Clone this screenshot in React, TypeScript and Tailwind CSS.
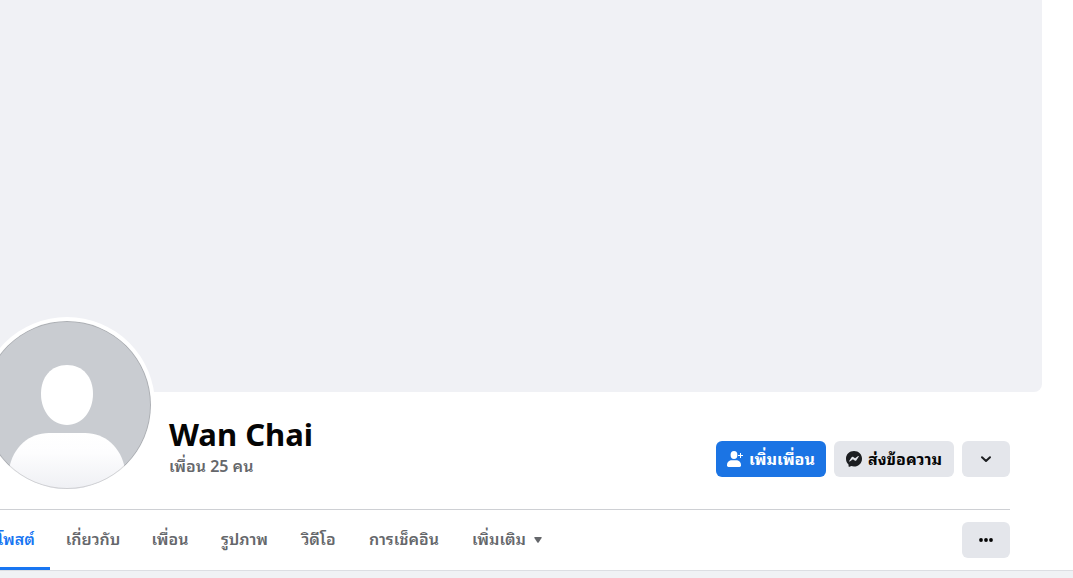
import React from 'react';

const tabs = [
  { label: 'โพสต์', width: 'w-[68px]', active: true },
  { label: 'เกี่ยวกับ', width: 'w-[86px]' },
  { label: 'เพื่อน', width: 'w-[68px]' },
  { label: 'รูปภาพ', width: 'w-[81px]' },
  { label: 'วิดีโอ', width: 'w-[67px]' },
  { label: 'การเช็คอิน', width: 'w-[104px]' },
];

const Avatar = () => (
  <svg viewBox="0 0 168 168" className="block size-[168px] rounded-full" role="img" aria-label="Wan Chai">
    <defs>
      <linearGradient id="body" x1="0" y1="0" x2="0" y2="1">
        <stop offset="0" stopColor="#ffffff" />
        <stop offset="0.35" stopColor="#fdfdfe" />
        <stop offset="1" stopColor="#eff0f4" />
      </linearGradient>
    </defs>
    <rect width="168" height="168" fill="#c9ccd1" />
    <path d="M84 44C100 44 110 56 110 73C110 90 99 104 84 104C69 104 58 90 58 73C58 56 68 44 84 44Z" fill="#fff" />
    <path d="M26 148C30 126 46 112 66 112H102C122 112 138 126 142 148V168H26Z" fill="url(#body)" />
    <circle cx="84" cy="84" r="83.5" fill="none" stroke="#000" strokeOpacity="0.14" />
  </svg>
);

const AddFriendIcon = () => (
  <svg viewBox="0 0 16 16" className="size-4 shrink-0" fill="currentColor" aria-hidden="true">
    <ellipse cx="7" cy="4" rx="3.4" ry="4" />
    <path d="M0 14C0 11 2.2 9.3 5 9.3H9C11.8 9.3 14 11 14 14V14.6Q14 16 12.6 16H1.4Q0 16 0 14.6Z" />
    <path d="M13 2H14V4H16V5H14V7H13V5H11V4H13Z" />
  </svg>
);

const MessengerIcon = () => (
  <svg viewBox="0 0 16 16" className="size-4 shrink-0" aria-hidden="true">
    <path
      d="M8 0C3.4 0 0 3.3 0 7.7C0 10 .9 12 2.5 13.4L2.6 15.2C2.6 15.7 3.1 16 3.6 15.8L5.3 15.1C6.1 15.4 7 15.5 8 15.5C12.6 15.5 16 12.2 16 7.7C16 3.3 12.6 0 8 0Z"
      fill="#1c1e21"
    />
    <path
      d="M3.2 10L5.6 6.2C6 5.6 6.8 5.5 7.3 5.9L9.1 7.3L12.2 5.1C12.6 4.9 13 5.2 12.8 5.6L10.4 9.3C10 9.9 9.2 10 8.7 9.6L6.9 8.2L3.8 10.5C3.4 10.8 3 10.4 3.2 10Z"
      fill="#e4e6eb"
    />
  </svg>
);

export default function App() {
  return (
    <div className="min-h-screen overflow-hidden bg-[#f0f2f5] font-['Noto_Sans','Noto_Sans_Thai_Looped','Noto_Looped_Thai','Noto_Sans_Thai',sans-serif]">
      <header className="border-b border-[#dcdee3] bg-white">
        <div className="mr-[31px] h-[392px] rounded-br-lg bg-[#f0f1f5]" />

        <div className="mr-[63px]">
          <div className="flex h-[117px] items-start">
            <div className="relative -mt-[75px] -ml-[21px] shrink-0 rounded-full bg-white p-1">
              <Avatar />
            </div>

            <div className="ml-[14px] flex-1 pt-6">
              <h1 className="text-[31px] leading-9 font-bold text-[#050505]">Wan Chai</h1>
              <a href="#friends" className="block text-base leading-7 font-semibold text-[#65676b]">
                เพื่อน 25 คน
              </a>
            </div>

            <div className="mt-[49px] flex shrink-0 gap-2 text-base font-bold">
              <button className="flex h-9 w-[110px] items-center justify-center gap-1.5 rounded-md bg-[#1b74e4] whitespace-nowrap text-white">
                <AddFriendIcon />
                เพิ่มเพื่อน
              </button>
              <button className="flex h-9 w-[120px] items-center justify-center gap-1.5 rounded-md bg-[#e4e6eb] whitespace-nowrap text-[#050505]">
                <MessengerIcon />
                ส่งข้อความ
              </button>
              <button aria-label="เพิ่มเติม" className="flex h-9 w-12 items-center justify-center rounded-md bg-[#e4e6eb] text-[#1c1e21]">
                <svg viewBox="0 0 16 16" className="size-4" fill="none" stroke="currentColor" strokeWidth="2" strokeLinecap="round" strokeLinejoin="round" aria-hidden="true">
                  <path d="M4 6.2L8 10L12 6.2" />
                </svg>
              </button>
            </div>
          </div>

          <nav className="flex h-[61px] items-center border-t border-[#ced0d4] text-base font-semibold text-[#65676b]">
            <div className="-ml-[18px] flex h-full flex-1">
              {tabs.map((tab) => (
                <a
                  key={tab.label}
                  href="#"
                  aria-current={tab.active ? 'page' : undefined}
                  className={`flex shrink-0 items-center justify-center border-b-[3px] whitespace-nowrap ${tab.width} ${
                    tab.active ? 'border-b-[#1876f2] text-[#1876f2]' : 'border-b-transparent'
                  }`}
                >
                  {tab.label}
                </a>
              ))}
              <button className="flex items-center gap-2 border-b-[3px] border-b-transparent px-4 whitespace-nowrap">
                เพิ่มเติม
                <svg viewBox="0 0 8 8" className="mt-0.5 size-2" fill="currentColor" aria-hidden="true">
                  <path d="M1 1H7Q8.3 1 7.6 2.1L4.8 6.2Q4 7.2 3.2 6.2L.4 2.1Q-.3 1 1 1Z" />
                </svg>
              </button>
            </div>
            <button aria-label="ตัวเลือก" className="flex h-9 w-12 items-center justify-center rounded-md bg-[#e4e6eb] text-[#050505]">
              <svg viewBox="0 0 16 16" className="size-4" fill="currentColor" aria-hidden="true">
                <circle cx="3" cy="8" r="1.9" />
                <circle cx="8" cy="8" r="1.9" />
                <circle cx="13" cy="8" r="1.9" />
              </svg>
            </button>
          </nav>
        </div>
      </header>
    </div>
  );
}
